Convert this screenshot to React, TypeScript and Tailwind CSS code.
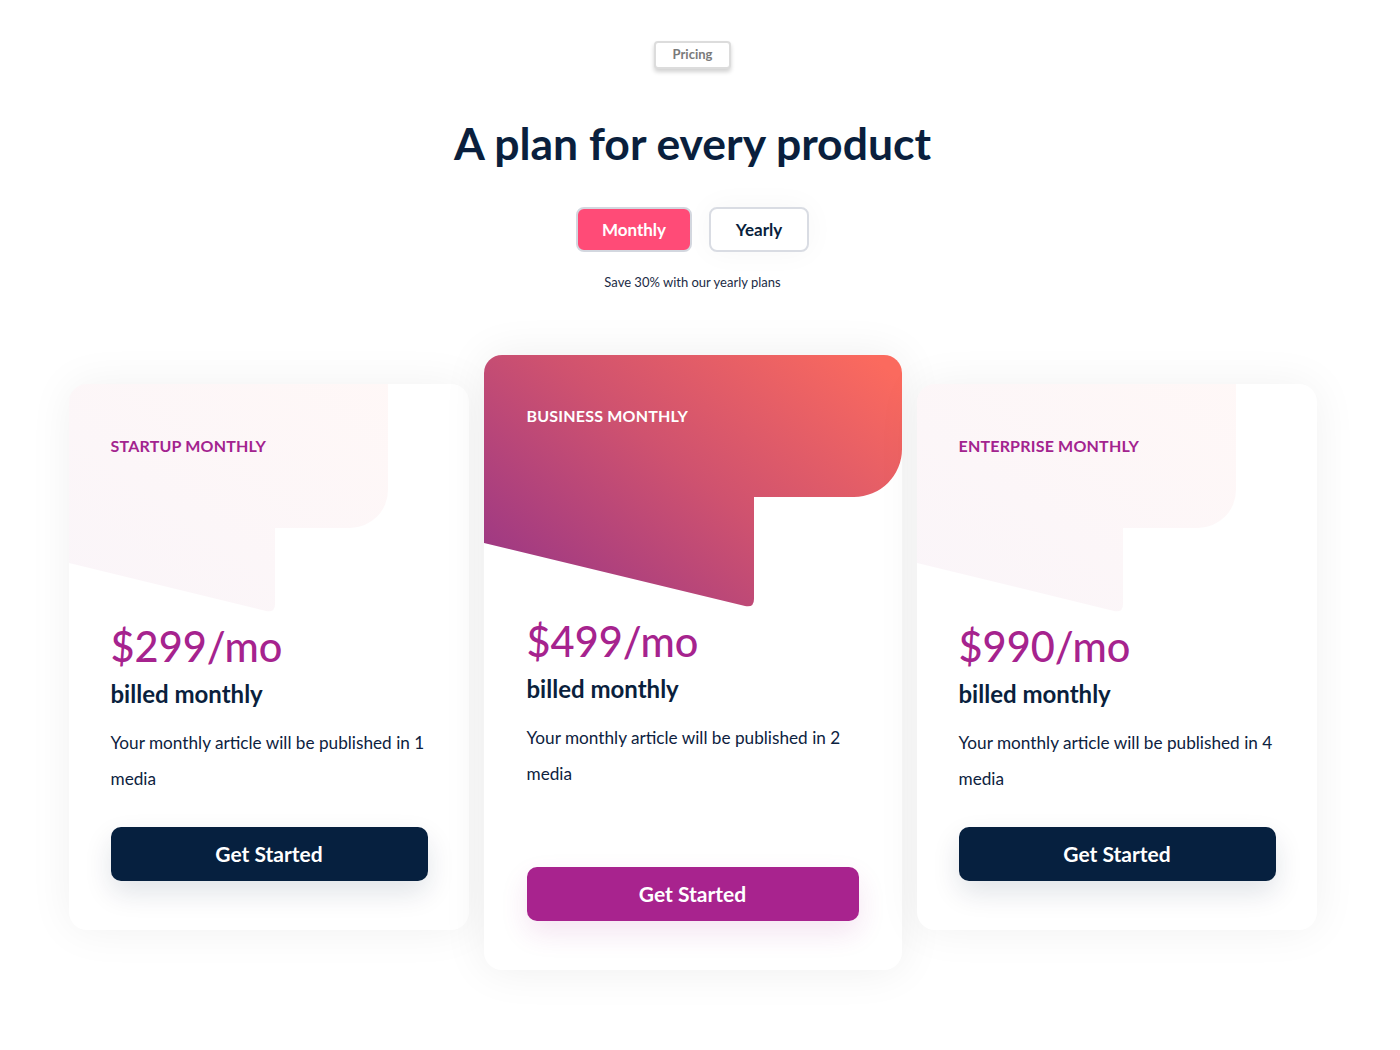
import React from "react";

interface Plan {
  name: string;
  price: string;
  media: number;
  featured?: boolean;
}

const plans: Plan[] = [
  { name: "Startup Monthly", price: "$299/mo", media: 1 },
  { name: "Business Monthly", price: "$499/mo", media: 2, featured: true },
  { name: "Enterprise Monthly", price: "$990/mo", media: 4 },
];

const SideShape = () => (
  <svg className="absolute left-0 top-0" width="319" height="230" viewBox="0 0 319 230">
    <defs>
      <linearGradient id="soft" x1="0" y1="1" x2="1" y2="0">
        <stop offset="0" stopColor="#9b3784" />
        <stop offset="1" stopColor="#fb6b5e" />
      </linearGradient>
    </defs>
    <path d="M0 0 H319 V106 A38 38 0 0 1 281 144 H206 V220 Q206 229 197 227 L0 179 Z" fill="url(#soft)" opacity="0.05" />
  </svg>
);

const FeaturedShape = () => (
  <svg className="absolute left-0 top-0" width="418" height="254" viewBox="0 0 418 254">
    <defs>
      <linearGradient id="hot" x1="0" y1="0.85" x2="1" y2="0.1">
        <stop offset="0" stopColor="#9b3785" />
        <stop offset="0.5" stopColor="#cf526f" />
        <stop offset="1" stopColor="#fb6a5e" />
      </linearGradient>
    </defs>
    <path d="M0 0 H418 V94 A48 48 0 0 1 370 142 H270 V244 Q270 253 261 251 L0 188 Z" fill="url(#hot)" />
  </svg>
);

const PlanCard = ({ plan }: { plan: Plan }) => {
  const featured = plan.featured;
  return (
    <div
      className={
        featured
          ? "relative flex h-[615px] w-[418px] flex-col overflow-hidden rounded-[18px] bg-white px-[43px] pb-[49px] pt-[49px] shadow-[0_0_45px_rgba(0,0,0,0.07)]"
          : "relative mt-[29px] flex h-[546px] w-[400px] flex-col overflow-hidden rounded-[18px] bg-white pl-[42px] pr-[41px] pb-[49px] pt-[50px] shadow-[0_0_45px_rgba(0,0,0,0.06)]"
      }
    >
      {featured ? <FeaturedShape /> : <SideShape />}
      <h3
        className={
          featured
            ? "relative text-[16px] font-bold uppercase leading-6 tracking-[0.2px] text-white"
            : "relative text-[16px] font-bold uppercase leading-6 tracking-[0.2px] text-[#a3238f]"
        }
      >
        {plan.name}
      </h3>
      <p
        className={
          featured
            ? "relative mt-[186px] text-[41.5px] font-medium leading-[54px] text-[#a6238e]"
            : "relative mt-[161px] text-[41.5px] font-medium leading-[54px] text-[#a6238e]"
        }
      >
        {plan.price}
      </p>
      <p className="mt-[6px] text-[24px] font-bold leading-[30px] text-[#0a1f3d]">billed monthly</p>
      <p className="mt-[16px] text-[17.2px] leading-[36px] text-[#0d2240]">
        Your monthly article will be published in {plan.media} media
      </p>
      <button
        className={
          featured
            ? "mt-auto h-[54px] w-full rounded-[10px] bg-[#a8238e] text-[21px] font-bold text-white shadow-[0_12px_28px_rgba(168,35,142,0.12)]"
            : "mt-auto h-[54px] w-full rounded-[10px] bg-[#06203f] text-[21px] font-bold text-white shadow-[0_12px_28px_rgba(6,32,63,0.12)]"
        }
      >
        Get Started
      </button>
    </div>
  );
};

export default function App() {
  return (
    <div className="min-h-[1050px] w-[1385px] bg-white font-['Lato',sans-serif]">
      <div className="flex flex-col items-center pt-[41px]">
        <span className="flex h-[28px] w-[77px] items-center justify-center rounded-[4px] border-2 border-[#dcdcdc] bg-white text-[13px] font-bold text-[#7a7a7a] shadow-[0_3px_4px_rgba(0,0,0,0.18)]">
          Pricing
        </span>
        <h1 className="mt-[47px] text-[44.5px] font-bold leading-[54px] text-[#0a1f3d]">A plan for every product</h1>
        <div className="mt-[37px] flex gap-[17px]">
          <button className="h-[45px] w-[116px] rounded-[8px] border-2 border-[#d3d7df] bg-[#ff4b77] text-[17px] font-bold text-white">
            Monthly
          </button>
          <button className="h-[45px] w-[100px] rounded-[8px] border-2 border-[#d9dce3] bg-white text-[17px] font-bold text-[#0a1f3d] shadow-[0_0_30px_rgba(0,0,0,0.04)]">
            Yearly
          </button>
        </div>
        <p className="mt-[21px] text-[13px] leading-[18px] text-[#1b2b45]">Save 30% with our yearly plans</p>
      </div>
      <div className="mt-[64px] flex items-start justify-center gap-[15px]">
        {plans.map((p) => (
          <PlanCard key={p.name} plan={p} />
        ))}
      </div>
    </div>
  );
}
